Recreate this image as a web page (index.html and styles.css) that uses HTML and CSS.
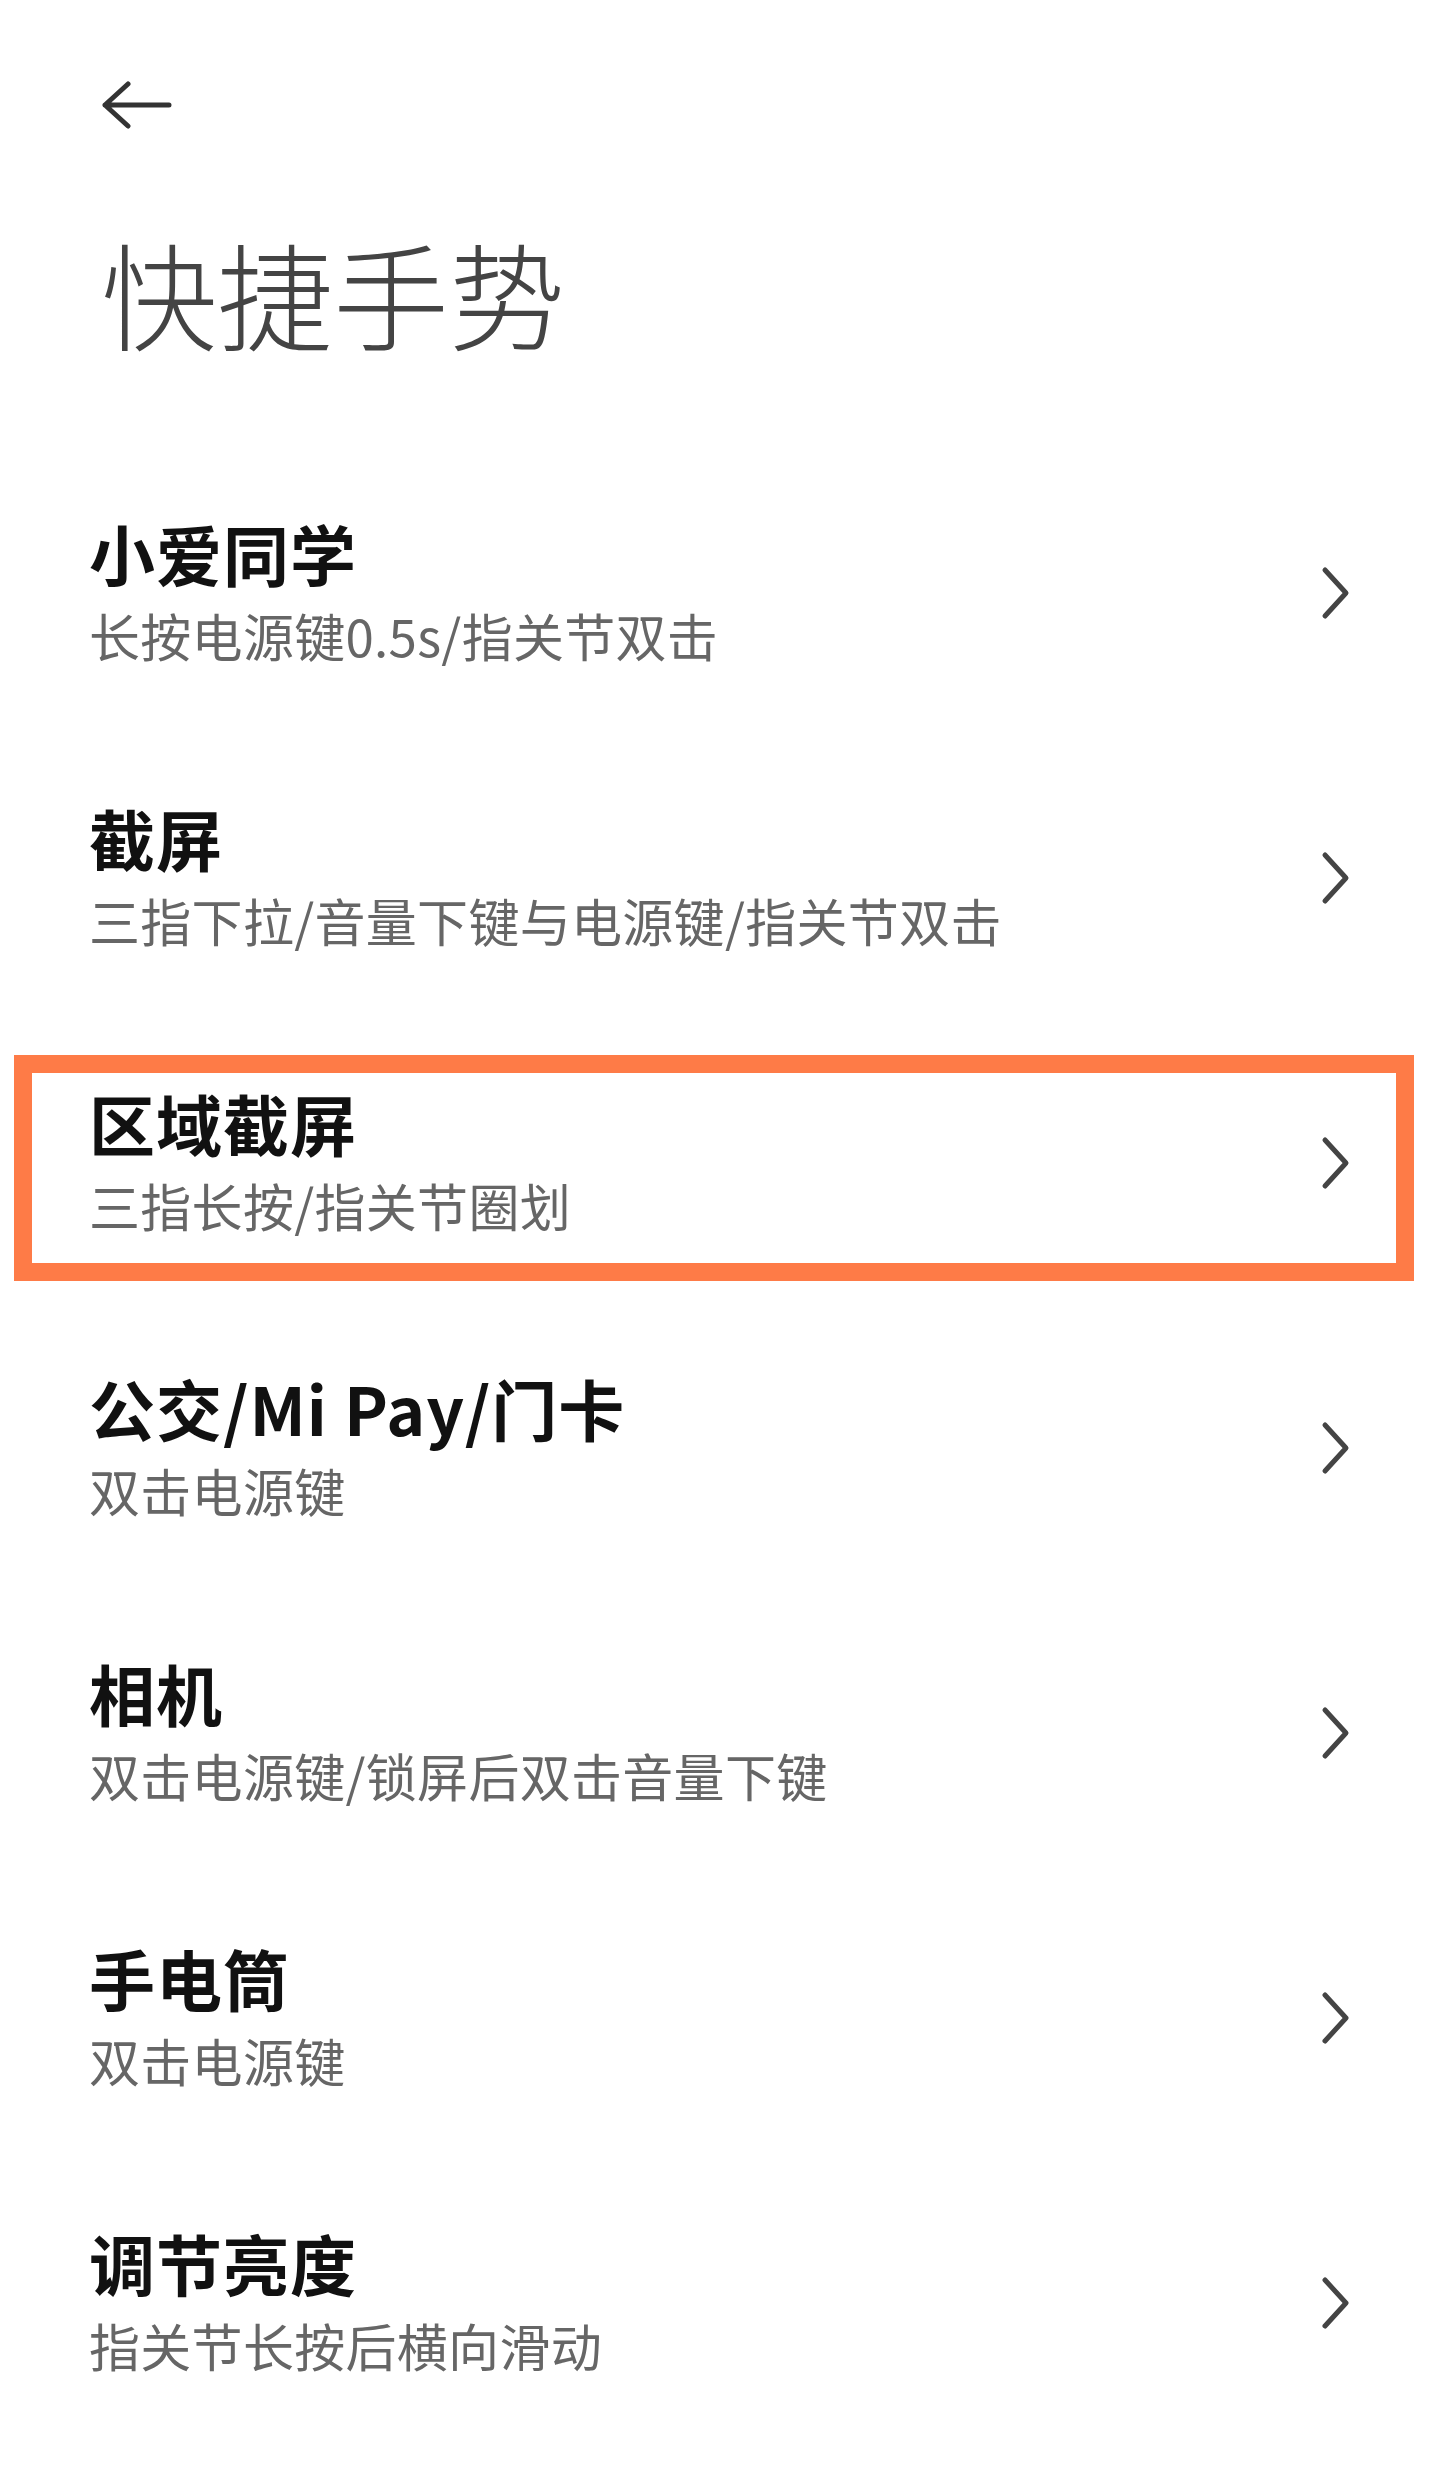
FILE: index.html
```html
<!DOCTYPE html>
<html lang="zh-CN">
<head>
<meta charset="utf-8">
<title>快捷手势</title>
<link rel="stylesheet" href="styles.css">
</head>
<body>
<div class="page">
  <header class="header">
    <div class="back">
      <svg width="72" height="48" viewBox="0 0 72 48" aria-hidden="true">
        <path d="M27 3 L4 24 L27 45 M4 24 H68" fill="none" stroke="#333" stroke-width="5" stroke-linecap="round" stroke-linejoin="round"/>
      </svg>
    </div>
    <h1 class="title">快捷手势</h1>
  </header>
  <ul class="list">
    <li class="row">
      <div class="text"><div class="name">小爱同学</div><div class="desc">长按电源键0.5s/指关节双击</div></div>
      <svg class="chev" width="32" height="54" viewBox="0 0 32 54" aria-hidden="true"><path d="M7 4 L28 27 L7 50" fill="none" stroke="#444" stroke-width="5" stroke-linecap="round" stroke-linejoin="round"/></svg>
    </li>
    <li class="row">
      <div class="text"><div class="name">截屏</div><div class="desc">三指下拉/音量下键与电源键/指关节双击</div></div>
      <svg class="chev" width="32" height="54" viewBox="0 0 32 54" aria-hidden="true"><path d="M7 4 L28 27 L7 50" fill="none" stroke="#444" stroke-width="5" stroke-linecap="round" stroke-linejoin="round"/></svg>
    </li>
    <li class="row row-highlight">
      <div class="text"><div class="name">区域截屏</div><div class="desc">三指长按/指关节圈划</div></div>
      <svg class="chev" width="32" height="54" viewBox="0 0 32 54" aria-hidden="true"><path d="M7 4 L28 27 L7 50" fill="none" stroke="#444" stroke-width="5" stroke-linecap="round" stroke-linejoin="round"/></svg>
    </li>
    <li class="row">
      <div class="text"><div class="name">公交/Mi Pay/门卡</div><div class="desc">双击电源键</div></div>
      <svg class="chev" width="32" height="54" viewBox="0 0 32 54" aria-hidden="true"><path d="M7 4 L28 27 L7 50" fill="none" stroke="#444" stroke-width="5" stroke-linecap="round" stroke-linejoin="round"/></svg>
    </li>
    <li class="row">
      <div class="text"><div class="name">相机</div><div class="desc">双击电源键/锁屏后双击音量下键</div></div>
      <svg class="chev" width="32" height="54" viewBox="0 0 32 54" aria-hidden="true"><path d="M7 4 L28 27 L7 50" fill="none" stroke="#444" stroke-width="5" stroke-linecap="round" stroke-linejoin="round"/></svg>
    </li>
    <li class="row">
      <div class="text"><div class="name">手电筒</div><div class="desc">双击电源键</div></div>
      <svg class="chev" width="32" height="54" viewBox="0 0 32 54" aria-hidden="true"><path d="M7 4 L28 27 L7 50" fill="none" stroke="#444" stroke-width="5" stroke-linecap="round" stroke-linejoin="round"/></svg>
    </li>
    <li class="row">
      <div class="text"><div class="name">调节亮度</div><div class="desc">指关节长按后横向滑动</div></div>
      <svg class="chev" width="32" height="54" viewBox="0 0 32 54" aria-hidden="true"><path d="M7 4 L28 27 L7 50" fill="none" stroke="#444" stroke-width="5" stroke-linecap="round" stroke-linejoin="round"/></svg>
    </li>
  </ul>
</div>
</body>
</html>
```
FILE: styles.css
```css
* { box-sizing: border-box; }
html, body {
  margin: 0;
  padding: 0;
  background: #ffffff;
}
body {
  font-family: "Noto Sans CJK SC", "Noto Sans", sans-serif;
  width: 1440px;
  min-height: 2469px;
}
.page {
  display: flex;
  flex-direction: column;
}
.header {
  display: flex;
  flex-direction: column;
  padding: 81px 0 0 101px;
}
.back {
  display: flex;
  height: 48px;
}
.back svg { display: block; }
.title {
  margin: 92px 0 0 0;
  font-size: 116px;
  line-height: 140px;
  font-weight: 300;
  color: #444444;
  letter-spacing: 0;
}
.list {
  list-style: none;
  margin: 89px 0 0 0;
  padding: 0;
  display: flex;
  flex-direction: column;
}
.row {
  position: relative;
  height: 285px;
  display: flex;
  align-items: center;
  justify-content: space-between;
  padding: 0 90px 0 89px;
}
.text {
  display: flex;
  flex-direction: column;
}
.name {
  font-size: 66px;
  line-height: 84px;
  font-weight: 600;
  letter-spacing: 1px;
  color: #111111;
}
.desc {
  font-size: 51px;
  line-height: 82px;
  font-weight: 400;
  color: #666666;
  letter-spacing: 0.3px;
}
.chev { display: block; flex: none; }
.row-highlight::after {
  content: "";
  position: absolute;
  top: 35px;
  bottom: 24px;
  left: 14px;
  right: 26px;
  border: 18px solid #fe7b47;
  pointer-events: none;
}
```
